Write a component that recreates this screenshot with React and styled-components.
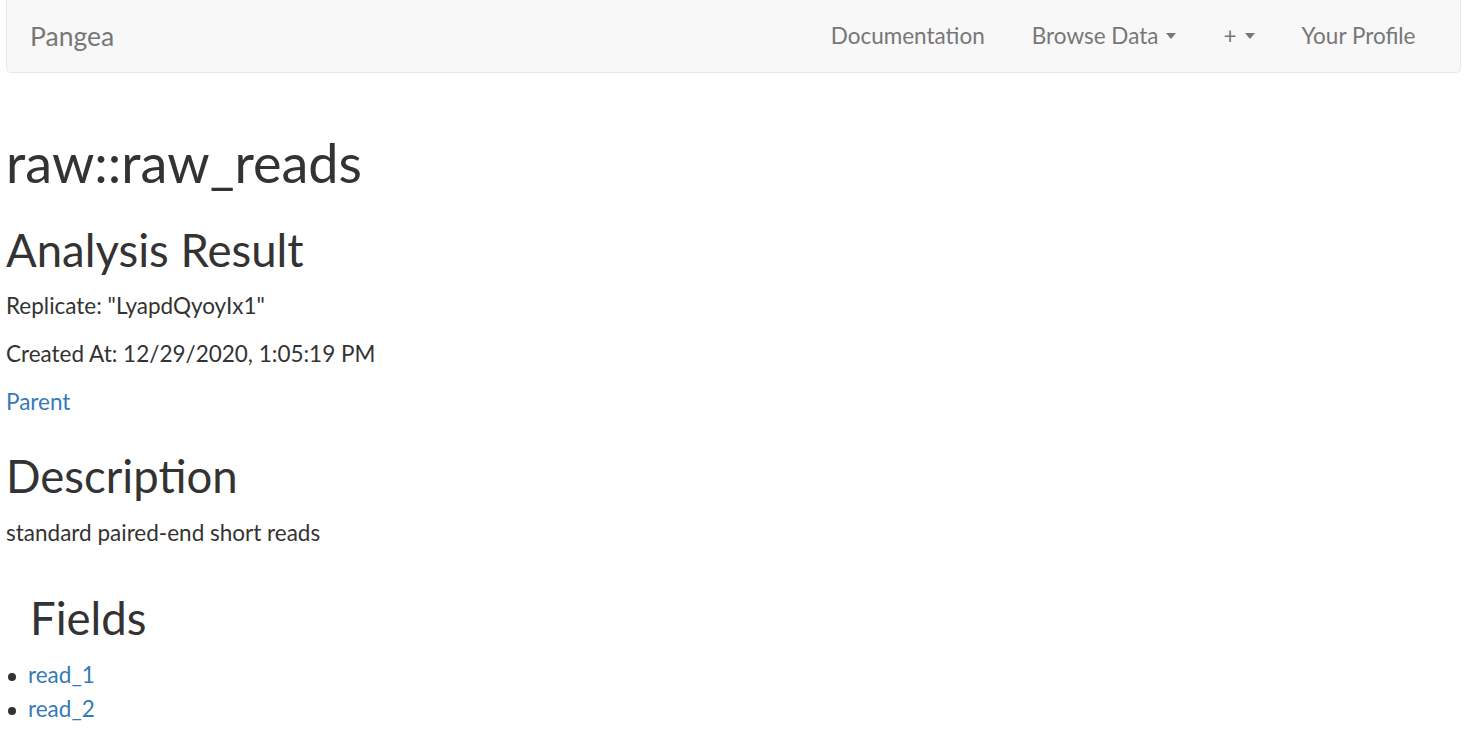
import styled, { createGlobalStyle } from 'styled-components'

const GlobalStyle = createGlobalStyle`
    body {
        margin: 0;
        background: #fff;
        color: #333;
        font-family: Lato, "Open Sans", "Liberation Sans", sans-serif;
        font-size: 22.5px;
        line-height: 32px;
    }
`

// subComponents
const Caret = () => <CaretMark />

const NavItem = ({ label, dropdown }) => (
    <NavLink>
        {label}
        {dropdown && <Caret />}
    </NavLink>
)

//mainComponent
const App = () => {
    const navList = [
        { label: 'Documentation' },
        { label: 'Browse Data', dropdown: true },
        { label: '+', dropdown: true },
        { label: 'Your Profile' },
    ]
    const fields = ['read_1', 'read_2']
    return (
        <>
            <GlobalStyle />
            <Nav>
                <Brand>Pangea</Brand>
                <NavMenu>
                    {navList.map((item, index) => (
                        <NavItem key={index} {...item} />
                    ))}
                </NavMenu>
            </Nav>
            <Page>
                <Title>raw::raw_reads</Title>
                <Heading>Analysis Result</Heading>
                <Text>Replicate: "LyapdQyoyIx1"</Text>
                <Text>Created At: 12/29/2020, 1:05:19 PM</Text>
                <Text><Link>Parent</Link></Text>
                <Heading $after={16}>Description</Heading>
                <Text>standard paired-end short reads</Text>
                <FieldList>
                    <FieldsHeading>Fields</FieldsHeading>
                    {fields.map(f => (
                        <Field key={f}><Link>{f}</Link></Field>
                    ))}
                </FieldList>
            </Page>
        </>
    )
}

export default App

//styles
const Nav = styled.nav`
    display: flex;
    align-items: center;
    height: 73px;
    box-sizing: border-box;
    margin: 0 7px 0 6px;
    padding: 0 21px 0 23px;
    background: #f8f8f8;
    border: 1px solid #e7e7e7;
    border-top: none;
    border-radius: 0 0 5px 5px;
`
const Brand = styled.a`
    flex: 1;
    font-size: 26.5px;
    color: #777;
    cursor: pointer;
`
const NavMenu = styled.div`
    display: flex;
    align-items: center;
`
const NavLink = styled.a`
    display: flex;
    align-items: center;
    padding: 0 23.5px;
    font-size: 22.5px;
    color: #777;
    cursor: pointer;
`
const CaretMark = styled.span`
    display: inline-block;
    width: 0;
    height: 0;
    margin-left: 8px;
    border-top: 6px solid #777;
    border-left: 5.5px solid transparent;
    border-right: 5.5px solid transparent;
`
const Page = styled.main`
    padding: 60px 6px 0;
`
const Title = styled.h1`
    margin: 0;
    font-size: 54px;
    font-weight: 400;
    line-height: 1.1;
`
const Heading = styled.h2`
    margin: 33px 0 ${p => p.$after || 15}px;
    font-size: 45.5px;
    font-weight: 400;
    line-height: 1.1;
`
const Text = styled.p`
    margin: 0 0 16px;
`
const Link = styled.a`
    color: #337ab7;
    cursor: pointer;
`
const FieldList = styled.ul`
    margin: 44px 0 0;
    padding: 0;
    list-style: none;
`
const FieldsHeading = styled.h2`
    margin: 0 0 14px;
    padding-left: 24px;
    font-size: 45.5px;
    font-weight: 400;
    line-height: 1.1;
`
const Field = styled.li`
    display: flex;
    align-items: center;
    line-height: 34px;

    &::before {
        content: '';
        flex-shrink: 0;
        width: 8px;
        height: 8px;
        margin: 5px 12px 0 2px;
        border-radius: 50%;
        background: #333;
    }
`
